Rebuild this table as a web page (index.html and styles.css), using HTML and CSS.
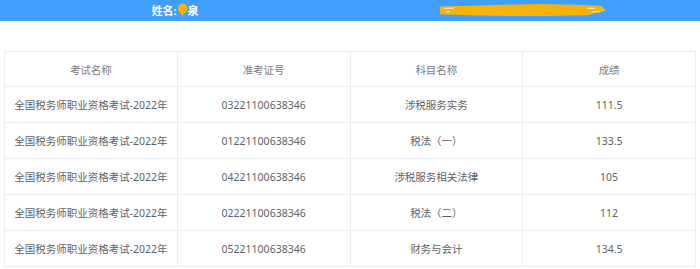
FILE: index.html
```html
<!DOCTYPE html>
<html lang="zh">
<head>
<meta charset="utf-8">
<link rel="stylesheet" href="styles.css">
</head>
<body>
<div class="topbar">
  <div class="half"><span class="name">姓名:<span class="redact-a"><span class="hid">某</span><svg class="blob" viewBox="0 0 12 18"><path d="M2 3 C5 0 10 1 11 5 C12 9 10 12 7 13 L6 17 L5 13 C2 12 0 7 2 3 Z" fill="#F5B40A"/></svg></span>泉</span></div>
  <div class="half"><span class="idno"><span class="hid2">000000000000000000</span><svg class="stroke" viewBox="0 0 170 14" preserveAspectRatio="none"><path d="M1 3 L30 2 L60 1 L100 0 L140 1 L164 2 L169 8 L150 13 L110 14 L70 14 L30 13 L1 12 Z" fill="#F7B30C"/><path d="M5 5 L15 5 M7 9 L11 9 M150 5 L158 5 M155 9 L163 9" stroke="#fff" stroke-width="1.2" opacity=".85"/></svg></span></div>
</div>
<div class="wrap">
<table class="score">
  <thead>
    <tr><th>考试名称</th><th>准考证号</th><th>科目名称</th><th>成绩</th></tr>
  </thead>
  <tbody>
    <tr><td>全国税务师职业资格考试-2022年</td><td>03221100638346</td><td>涉税服务实务</td><td>111.5</td></tr>
    <tr><td>全国税务师职业资格考试-2022年</td><td>01221100638346</td><td>税法（一）</td><td>133.5</td></tr>
    <tr><td>全国税务师职业资格考试-2022年</td><td>04221100638346</td><td>涉税服务相关法律</td><td>105</td></tr>
    <tr><td>全国税务师职业资格考试-2022年</td><td>02221100638346</td><td>税法（二）</td><td>112</td></tr>
    <tr><td>全国税务师职业资格考试-2022年</td><td>05221100638346</td><td>财务与会计</td><td>134.5</td></tr>
  </tbody>
</table>
</div>
</body>
</html>
```
FILE: styles.css
```css
html, body {
  margin: 0;
  padding: 0;
  background: #fff;
  font-family: "Noto Sans", "Noto Sans CJK SC", sans-serif;
}
.topbar {
  display: flex;
  height: 21px;
  background: #409EFF;
  color: #fff;
  font-size: 11px;
  font-weight: bold;
  line-height: 21px;
}
.half {
  flex: 1;
  display: flex;
  justify-content: center;
}
.name {
  display: inline-flex;
  align-items: center;
}
.redact-a {
  position: relative;
  display: inline-block;
}
.hid { visibility: hidden; }
.blob {
  position: absolute;
  left: 0;
  top: 2px;
  width: 11px;
  height: 17px;
}
.idno {
  position: relative;
  display: block;
  width: 168px;
  height: 21px;
  margin-left: -4px;
}
.hid2 { visibility: hidden; }
.stroke {
  position: absolute;
  left: 0;
  top: 4px;
  width: 168px;
  height: 12px;
}
.wrap {
  padding: 30px 4px 0 4px;
}
.score {
  width: 692px;
  border-collapse: collapse;
  table-layout: fixed;
  font-size: 10.5px;
  color: #606266;
}
.score th, .score td {
  border: 1px solid #EBEEF5;
  height: 35px;
  padding: 0;
  text-align: center;
  font-weight: normal;
  white-space: nowrap;
}
.score th {
  height: 34px;
  color: #7a7c80;
}
```
